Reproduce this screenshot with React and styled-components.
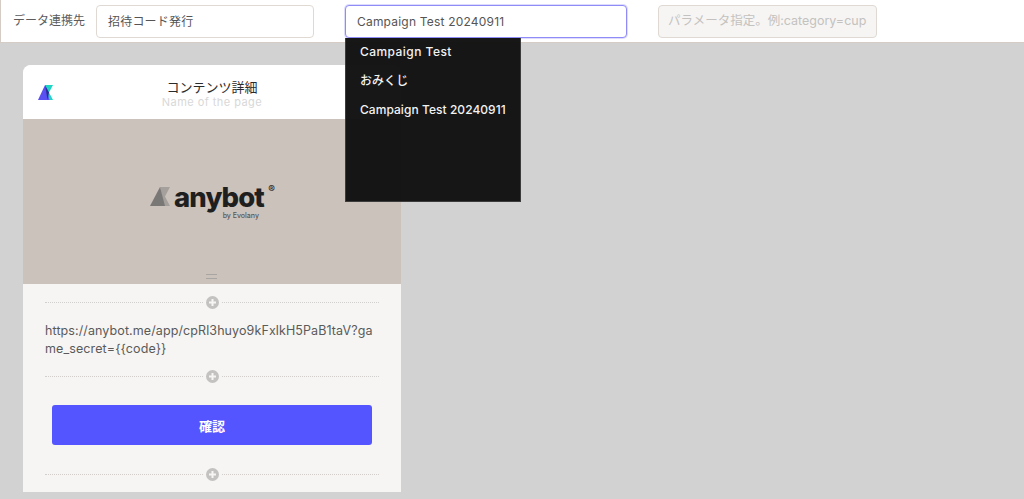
import React from "react";
import styled, { createGlobalStyle } from "styled-components";

const FONT = `"Inter", "Noto Sans CJK JP", sans-serif`;

const Global = createGlobalStyle`
  html, body { margin: 0; padding: 0; height: 100%; overflow: hidden; }
  body { font-family: ${FONT}; background: #d2d2d2; }
  * { box-sizing: border-box; }
`;

const Page = styled.div`
  width: 1024px;
  height: 499px;
  display: flex;
  flex-direction: column;
  position: relative;
  overflow: hidden;
  background: #d2d2d2;
`;

const Toolbar = styled.header`
  height: 43px;
  flex: none;
  background: #fff;
  border-bottom: 1px solid #d5ccc6;
  border-left: 1px solid #d5ccc6;
  display: flex;
  align-items: flex-start;
  padding: 5px 0 0 12px;
`;

const Label = styled.span`
  width: 83px;
  flex: none;
  font-size: 12px;
  line-height: 32px;
  color: #5c5c5c;
`;

const FieldWrap = styled.div`
  position: relative;
  width: ${(p) => p.$w}px;
  margin-right: ${(p) => p.$mr}px;
  flex: none;
`;

const Field = styled.div`
  height: 33px;
  border-radius: 4px;
  border: 1px solid ${(p) => (p.$focus ? "#8f8cf8" : "#e0d9d3")};
  box-shadow: ${(p) => (p.$focus ? "0 0 0 1px rgba(143, 140, 248, 0.3)" : "none")};
  background: ${(p) => (p.$disabled ? "#f6f5f3" : "#fff")};
  color: ${(p) => (p.$disabled ? "#c4c2bf" : "#555")};
  font-size: ${(p) => (p.$disabled ? 12.5 : 12)}px;
  line-height: ${(p) => (p.$disabled ? 29 : 31)}px;
  padding: 0 0 0 ${(p) => (p.$disabled ? 9 : 11)}px;
  white-space: nowrap;
  overflow: hidden;
  letter-spacing: ${(p) => (p.$disabled ? "0" : "0.2px")};
`;

const Menu = styled.ul`
  position: absolute;
  z-index: 5;
  top: 33px;
  left: 0;
  width: 176px;
  height: 164px;
  margin: 0;
  padding: 0;
  list-style: none;
  background: rgba(15, 15, 15, 0.97);
  border-left: 1px solid #3c3c3c;
  border-right: 1px solid #3c3c3c;
  border-bottom: 1px solid #3c3c3c;
`;

const MenuItem = styled.li`
  height: 29px;
  padding-left: 14px;
  font-size: 12px;
  font-weight: 500;
  line-height: 27px;
  color: #f2f2f2;
  white-space: nowrap;
  letter-spacing: ${(p) => (p.$wide ? "0.45px" : "0.05px")};
`;

const Canvas = styled.main`
  flex: 1;
  padding: 22px 0 0 23px;
`;

const Card = styled.section`
  width: 378px;
  height: 427px;
  border-radius: 8px 8px 0 0;
  overflow: hidden;
  display: flex;
  flex-direction: column;
  background: #f6f5f3;
`;

const CardHeader = styled.div`
  position: relative;
  flex: none;
  height: 54px;
  background: #fff;
  text-align: center;
  padding-top: 14px;
`;

const Brand = styled.svg`
  position: absolute;
  left: 15px;
  top: 20px;
`;

const Title = styled.div`
  font-size: 13px;
  line-height: 16px;
  color: #2b2b2b;
`;

const Subtitle = styled.div`
  font-size: 11px;
  line-height: 14px;
  letter-spacing: 0.45px;
  color: #d8d8d8;
`;

const Hero = styled.div`
  position: relative;
  flex: none;
  height: 165px;
  background: #cbc2bc;
  display: flex;
  align-items: center;
  justify-content: center;
`;

const Logo = styled.div`
  display: flex;
  align-items: center;
  gap: 4px;
  position: relative;
  left: -5px;
  top: -5px;
`;

const Wordmark = styled.span`
  font-size: 27.5px;
  font-weight: 800;
  line-height: 30px;
  letter-spacing: -0.9px;
  color: #1f1f1f;
`;

const Registered = styled.span`
  position: absolute;
  right: -11px;
  top: 1px;
  font-size: 10px;
  font-weight: 700;
  color: #2a2a2a;
`;

const ByLine = styled.span`
  position: absolute;
  right: 5px;
  bottom: -8px;
  font-size: 7px;
  font-weight: 500;
  color: #5c5855;
`;

const Grip = styled.div`
  position: absolute;
  left: 183px;
  bottom: 5px;
  width: 11px;
  height: 5px;
  border-top: 1px solid #a9a5a2;
  border-bottom: 1px solid #a9a5a2;
`;

const Body = styled.div`
  flex: 1;
  padding: 0 22px;
  display: flex;
  flex-direction: column;
`;

const DividerRow = styled.div`
  height: 13px;
  display: flex;
  align-items: center;
  gap: 3px;
  margin-top: ${(p) => p.$mt}px;
  flex: none;
`;

const Dots = styled.span`
  flex: 1;
  border-top: 1px dotted #d2cecb;
`;

const LinkText = styled.p`
  margin: 13px 0 0;
  font-size: 12.5px;
  line-height: 18px;
  color: #5a5a5a;
  word-break: break-all;
  letter-spacing: 0.1px;
`;

const Cta = styled.button`
  display: block;
  width: 320px;
  height: 40px;
  margin: 22px 0 0 7px;
  flex: none;
  border: 0;
  border-radius: 3px;
  background: #5555ff;
  color: #fff;
  font-family: ${FONT};
  font-size: 13px;
  font-weight: 700;
`;

const Plus = () => (
  <svg width="13" height="13" viewBox="0 0 13 13" aria-hidden="true">
    <circle cx="6.5" cy="6.5" r="6.5" fill="#c4c2c0" />
    <path d="M6.5 3v7M3 6.5h7" stroke="#f6f5f3" strokeWidth="2" />
  </svg>
);

const Divider = ({ mt }) => (
  <DividerRow $mt={mt}>
    <Dots />
    <Plus />
    <Dots />
  </DividerRow>
);

export default function App() {
  return (
    <Page>
      <Global />
      <Toolbar>
        <Label>データ連携先</Label>
        <FieldWrap $w={218} $mr={31}>
          <Field>招待コード発行</Field>
        </FieldWrap>
        <FieldWrap $w={282} $mr={31}>
          <Field $focus>Campaign Test 20240911</Field>
          <Menu>
            <MenuItem $wide>Campaign Test</MenuItem>
            <MenuItem>おみくじ</MenuItem>
            <MenuItem>Campaign Test 20240911</MenuItem>
          </Menu>
        </FieldWrap>
        <FieldWrap $w={219} $mr={0}>
          <Field $disabled>パラメータ指定。例:category=cup</Field>
        </FieldWrap>
      </Toolbar>
      <Canvas>
        <Card>
          <CardHeader>
            <Brand width="15" height="15" viewBox="0 0 15 15" aria-hidden="true">
              <path d="M7 0h8l-4 7.5L15 15H9.5z" fill="#1fd6c4" />
              <path d="M7 0l4.5 15H0z" fill="#5a4ff0" />
              <path d="M7 0l4 7.5L9.5 15z" fill="#2f2a9c" />
            </Brand>
            <Title>コンテンツ詳細</Title>
            <Subtitle>Name of the page</Subtitle>
          </CardHeader>
          <Hero>
            <Logo>
              <svg width="20" height="19" viewBox="0 0 20 19" aria-hidden="true">
                <path d="M10 0h10l-5 9.5L20 19h-7z" fill="#a5a09c" />
                <path d="M10 0l5 19H0z" fill="#7a7876" />
              </svg>
              <Wordmark>anybot</Wordmark>
              <Registered>®</Registered>
              <ByLine>by Evolany</ByLine>
            </Logo>
            <Grip />
          </Hero>
          <Body>
            <Divider mt={12} />
            <LinkText>
              https://anybot.me/app/cpRl3huyo9kFxlkH5PaB1taV?game_secret={"{{code}}"}
            </LinkText>
            <Divider mt={12} />
            <Cta>確認</Cta>
            <Divider mt={23} />
          </Body>
        </Card>
      </Canvas>
    </Page>
  );
}
